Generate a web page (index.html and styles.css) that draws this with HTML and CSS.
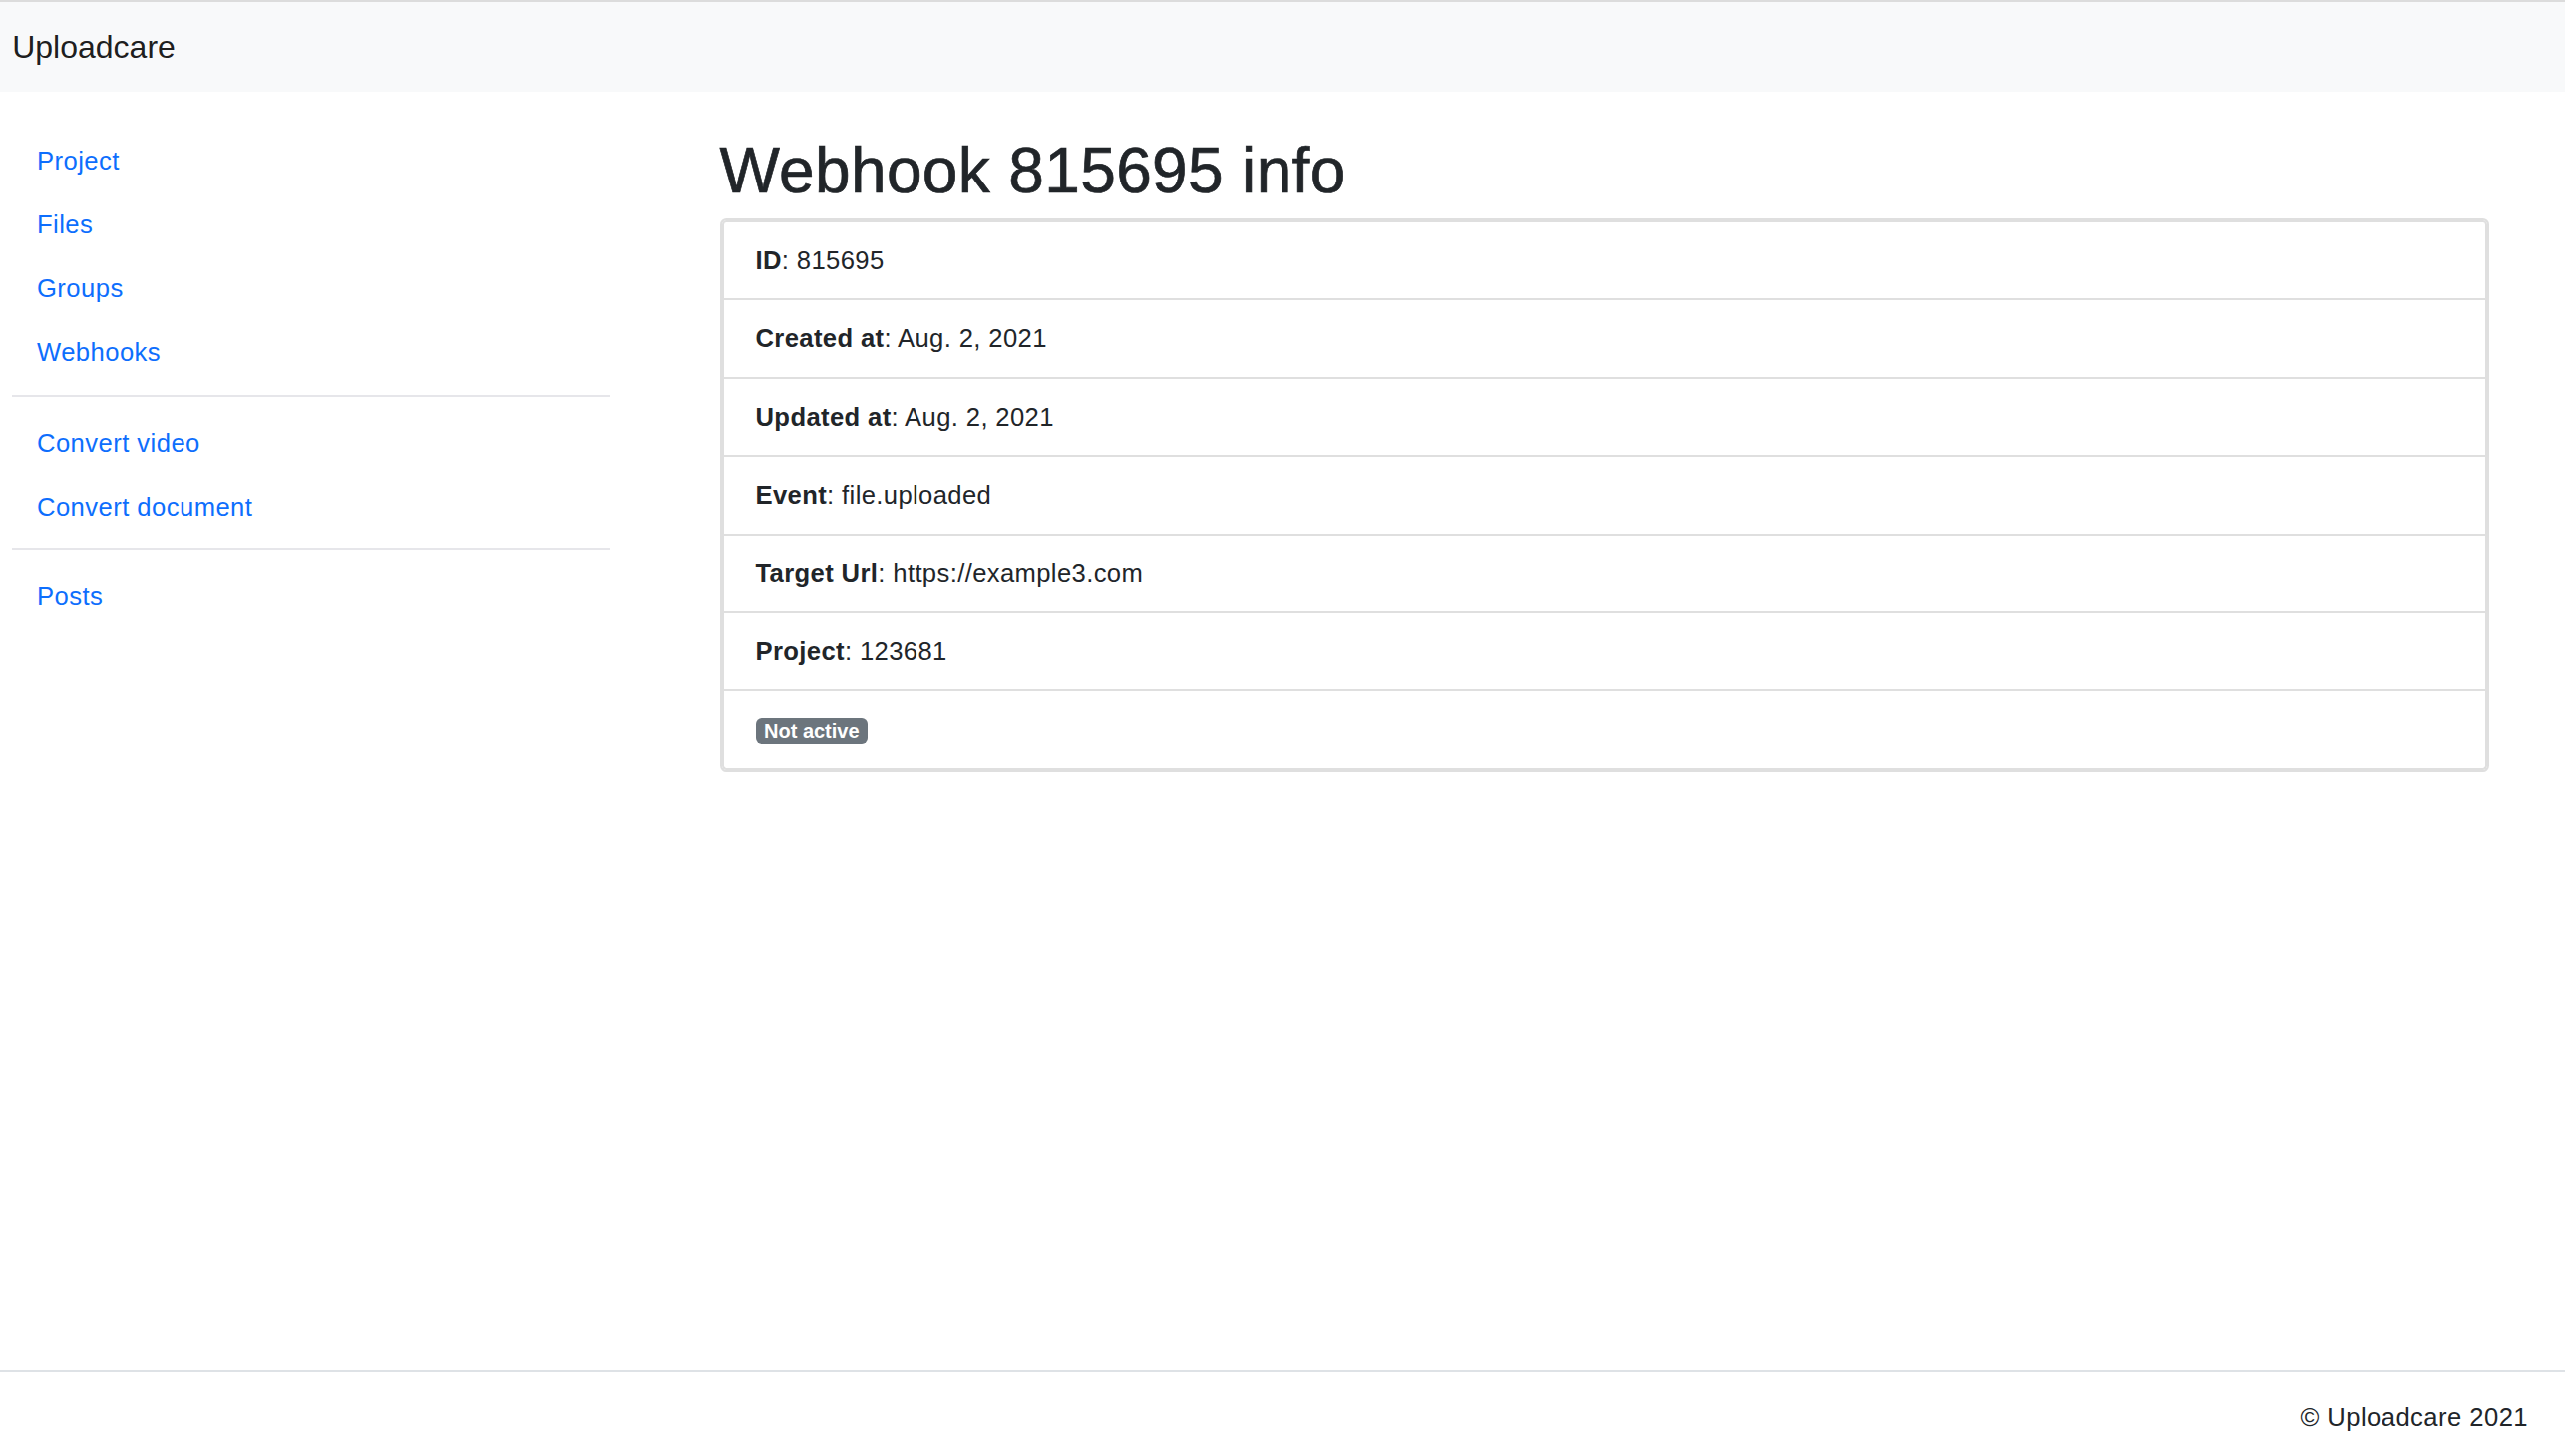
FILE: index.html
```html
<!DOCTYPE html>
<html lang="en">
<head>
<meta charset="utf-8">
<title>Webhook 815695 info</title>
<link rel="stylesheet" href="styles.css">
</head>
<body>
<nav class="navbar">
  <a class="brand" href="#">Uploadcare</a>
</nav>
<div class="page">
  <aside class="sidebar">
    <ul class="nav">
      <li><a href="#">Project</a></li>
      <li><a href="#">Files</a></li>
      <li><a href="#">Groups</a></li>
      <li><a href="#">Webhooks</a></li>
    </ul>
    <hr class="divider">
    <ul class="nav">
      <li><a href="#">Convert video</a></li>
      <li><a href="#">Convert document</a></li>
    </ul>
    <hr class="divider">
    <ul class="nav">
      <li><a href="#">Posts</a></li>
    </ul>
  </aside>
  <main class="content">
    <h1 class="title">Webhook 815695 info</h1>
    <div class="card">
      <ul class="list-group">
        <li class="item"><b>ID</b>: 815695</li>
        <li class="item"><b>Created at</b>: Aug. 2, 2021</li>
        <li class="item"><b>Updated at</b>: Aug. 2, 2021</li>
        <li class="item"><b>Event</b>: file.uploaded</li>
        <li class="item"><b>Target Url</b>: https://example3.com</li>
        <li class="item"><b>Project</b>: 123681</li>
        <li class="item"><span class="badge">Not active</span></li>
      </ul>
    </div>
  </main>
</div>
<footer class="footer">© Uploadcare 2021</footer>
</body>
</html>
```

FILE: styles.css
```css
html {
  background: #fff;
}

body {
  margin: 0;
  min-height: 100vh;
  display: flex;
  flex-direction: column;
  font-family: "Liberation Sans", Arial, Helvetica, sans-serif;
  font-size: 25.6px;
  line-height: 1.5;
  letter-spacing: 0.38px;
  color: #212529;
  background: #fff;
}

.navbar {
  border-top: 2px solid #dcdcdc;
  background: #f8f9fa;
  height: 89.7px;
  display: flex;
  align-items: center;
  padding-left: 12.2px;
  flex-shrink: 0;
}

.brand {
  font-size: 32px;
  line-height: 1.5;
  letter-spacing: 0;
  color: rgba(0, 0, 0, 0.9);
  text-decoration: none;
}

.page {
  flex: 1;
  display: grid;
  grid-template-columns: 600px 1fr;
  column-gap: 109.5px;
  align-items: start;
  padding: 37.9px 76px 0 12px;
}

.nav {
  list-style: none;
  margin: 0;
  padding: 0;
}

.nav a {
  display: block;
  padding: 12.8px 25px;
  color: #0d6efd;
  letter-spacing: 0.45px;
  text-decoration: none;
}

.divider {
  height: 0;
  border: 0;
  border-top: 2px solid #e6e6ea;
  margin: 10.5px 0 14px;
}

.title {
  font-size: 64px;
  font-weight: 500;
  line-height: 1.2;
  letter-spacing: 0.35px;
  margin: 3px 0 9.6px;
  -webkit-text-stroke: 0.7px #212529;
}

.card {
  border: 2px solid #dfdfdf;
  border-radius: 6.4px;
  background: #fff;
}

.list-group {
  list-style: none;
  margin: 0;
  padding: 0;
}

.item {
  border: 2px solid #dfdfdf;
  padding: 19px 32px;
}

.item + .item {
  border-top-width: 0;
}

.item:first-child {
  border-top-left-radius: 4.4px;
  border-top-right-radius: 4.4px;
}

.item:last-child {
  border-bottom-left-radius: 4.4px;
  border-bottom-right-radius: 4.4px;
}

.item b {
  font-weight: 700;
}

.badge {
  display: inline-block;
  font-size: 20px;
  font-weight: 700;
  line-height: 1;
  letter-spacing: 0;
  padding: 3px 8.5px;
  border-radius: 6px;
  background: #6c757d;
  color: #fff;
}

.footer {
  flex-shrink: 0;
  border-top: 2px solid #dee2e6;
  padding: 26.7px 37px 19.3px;
  letter-spacing: 0.45px;
  text-align: right;
}
```
